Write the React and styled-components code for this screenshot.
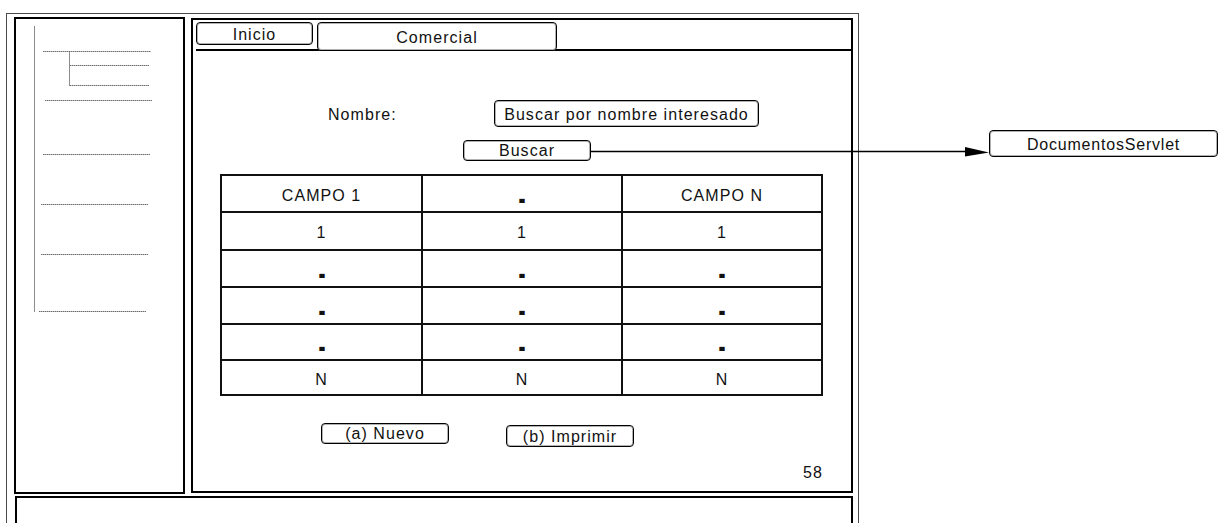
import React from "react";
import styled, { createGlobalStyle } from "styled-components";

const Global = createGlobalStyle`
  html, body { margin: 0; padding: 0; background: #fff; }
  body {
    font-family: "Liberation Sans", Arial, sans-serif;
    color: #111;
    font-size: 16px;
  }
`;

const TEXT = `
  font-size: 16px;
  line-height: 18px;
  letter-spacing: 1.05px;
`;

const Canvas = styled.div`
  position: relative;
  width: 1220px;
  height: 523px;
  overflow: hidden;
  background: #fff;
`;

const Frame = styled.div`
  box-sizing: border-box;
  margin: 13px 0 0 6px;
  width: 853px;
  height: 540px;
  border: 1px solid #4a4a4a;
  padding: 3px 0 0 7px;
  display: grid;
  grid-template-columns: 171px 662px;
  grid-template-rows: 477px auto;
  column-gap: 6px;
  row-gap: 2px;
  align-items: start;
`;

const Sidebar = styled.nav`
  box-sizing: border-box;
  height: 477px;
  border: 2px solid #000;
  padding: 7px 0 0 18px;
`;

const Rail = styled.div`
  display: flex;
  flex-direction: column;
  align-items: flex-start;
  border-left: 1px solid #8c8c8c;
`;

const Rule = styled.div`
  height: 1px;
  width: ${(p) => p.$w}px;
  margin-left: ${(p) => p.$x}px;
  margin-top: ${(p) => p.$t}px;
  background: repeating-linear-gradient(90deg, #6a6a6a 0 1px, #b8b8b8 1px 2px);
`;

const SubTree = styled.div`
  display: flex;
  flex-direction: column;
  align-items: flex-start;
  box-sizing: border-box;
  height: 34px;
  margin-left: 34px;
  border-left: 1px solid #8c8c8c;
`;

const Main = styled.main`
  box-sizing: border-box;
  height: 475px;
  margin-top: 1px;
  border: 2px solid #000;
  display: flex;
  flex-direction: column;
`;

const TabBar = styled.div`
  display: flex;
  align-items: flex-start;
  gap: 4px;
  height: 27px;
  margin: 2px 0 0 3px;
  border-bottom: 2px solid #000;
`;

const Box = styled.div`
  box-sizing: border-box;
  flex: none;
  width: ${(p) => p.$w}px;
  height: ${(p) => p.$h}px;
  margin-top: ${(p) => p.$t || 0}px;
  border: 1px solid #000;
  box-shadow: inset 0 0 0 1px rgba(0, 0, 0, 0.3);
  border-radius: 4px;
  background: #fff;
  display: flex;
  align-items: center;
  justify-content: center;
  padding-top: ${(p) => p.$pt || 0}px;
  ${TEXT}
  white-space: nowrap;
`;

const SearchRow = styled.div`
  display: flex;
  align-items: center;
  margin-top: 49px;
  padding-left: 135px;
`;

const Label = styled.span`
  width: 166px;
  ${TEXT}
  padding-top: 2px;
`;

const ButtonRow = styled.div`
  display: flex;
  align-items: flex-start;
  gap: ${(p) => p.$gap || 0}px;
  margin-top: ${(p) => p.$t}px;
  padding-left: ${(p) => p.$x}px;
`;

const Table = styled.div`
  box-sizing: border-box;
  width: 603px;
  margin: 13px 0 0 27px;
  display: grid;
  grid-template-columns: 201px 200px 200px;
  grid-template-rows: 37px 38px 37px 37px 36px 35px;
  border-top: 2px solid #111;
  border-left: 2px solid #111;
`;

const Cell = styled.div`
  box-sizing: border-box;
  border-right: 2px solid #111;
  border-bottom: 2px solid #111;
  display: flex;
  align-items: center;
  justify-content: center;
  padding-top: 4px;
  ${TEXT}
`;

const Dot = styled.span`
  display: inline-block;
  font-size: 28px;
  font-weight: bold;
  line-height: 16px;
  height: 16px;
  letter-spacing: 0;
  transform: translateY(-2px) scaleX(1.35);
`;

const PageNumber = styled.div`
  margin-top: 17px;
  padding-right: 28px;
  text-align: right;
  ${TEXT}
`;

const BottomPanel = styled.footer`
  grid-column: 1 / -1;
  box-sizing: border-box;
  margin-left: 1px;
  width: 838px;
  height: 40px;
  border: 2px solid #000;
`;

const ServletNode = styled.div`
  position: absolute;
  left: 989px;
  top: 130px;
  box-sizing: border-box;
  width: 229px;
  height: 27px;
  border: 1px solid #000;
  box-shadow: inset 0 0 0 1px rgba(0, 0, 0, 0.3);
  border-radius: 4px;
  background: #fff;
  display: flex;
  align-items: center;
  justify-content: center;
  padding-top: 3px;
  ${TEXT}
  letter-spacing: 0.8px;
`;

const Connector = styled.svg`
  position: absolute;
  left: 591px;
  top: 144px;
  overflow: visible;
`;

const rows = [
  ["CAMPO 1", ".", "CAMPO N"],
  ["1", "1", "1"],
  [".", ".", "."],
  [".", ".", "."],
  [".", ".", "."],
  ["N", "N", "N"],
];

export default function App() {
  return (
    <Canvas>
      <Global />
      <Frame>
        <Sidebar>
          <Rail>
            <Rule $t={25} $x={8} $w={108} />
            <SubTree>
              <Rule $t={13} $x={0} $w={79} />
              <Rule $t={19} $x={0} $w={79} />
            </SubTree>
            <Rule $t={14} $x={10} $w={107} />
            <Rule $t={53} $x={8} $w={107} />
            <Rule $t={49} $x={6} $w={107} />
            <Rule $t={49} $x={6} $w={107} />
            <Rule $t={56} $x={4} $w={107} />
          </Rail>
        </Sidebar>

        <Main>
          <TabBar>
            <Box $w={117} $h={23} $pt={3}>Inicio</Box>
            <Box $w={240} $h={29} $pt={3}>Comercial</Box>
          </TabBar>

          <SearchRow>
            <Label>Nombre:</Label>
            <Box $w={265} $h={27} $pt={2}>Buscar por nombre interesado</Box>
          </SearchRow>

          <ButtonRow $t={13} $x={270}>
            <Box $w={128} $h={21} $pt={1}>Buscar</Box>
          </ButtonRow>

          <Table>
            {rows.map((r, i) =>
              r.map((c, j) => (
                <Cell key={`${i}-${j}`}>{c === "." ? <Dot>.</Dot> : c}</Cell>
              ))
            )}
          </Table>

          <ButtonRow $t={27} $x={128} $gap={57}>
            <Box $w={128} $h={21}>(a) Nuevo</Box>
            <Box $w={128} $h={22} $t={2} $pt={1}>(b) Imprimir</Box>
          </ButtonRow>

          <PageNumber>58</PageNumber>
        </Main>

        <BottomPanel />
      </Frame>

      <Connector width="400" height="16" viewBox="0 0 400 16">
        <line x1="0" y1="7.5" x2="376" y2="7.5" stroke="#000" strokeWidth="1.3" />
        <polygon points="374,3 398,8.5 374,12.5" fill="#000" />
      </Connector>
      <ServletNode>DocumentosServlet</ServletNode>
    </Canvas>
  );
}
